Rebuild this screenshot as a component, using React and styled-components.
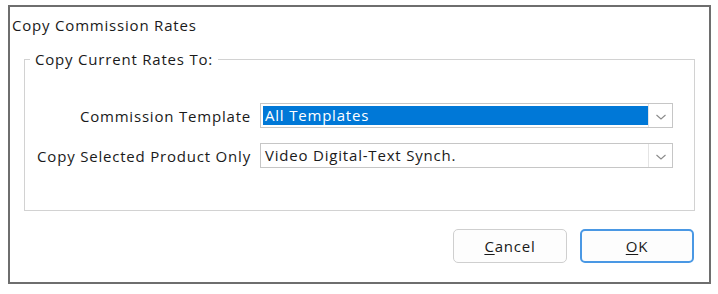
import styled, { createGlobalStyle } from "styled-components"

const GlobalStyle = createGlobalStyle`
    html, body {
        margin: 0;
        padding: 0;
        background: #ffffff;
    }
    body {
        font-family: "Open Sans", "Noto Sans", sans-serif;
        color: #1a1a1a;
    }
`

const rows = [
    { label: "Commission Template", value: "All Templates", selected: true },
    { label: "Copy Selected Product Only", value: "Video Digital-Text Synch.", selected: false },
]

function Chevron() {
    return (
        <svg width="12" height="8" viewBox="0 0 12 8">
            <path d="M1.5 2 L6 6 L10.5 2" fill="none" stroke="#8a8a8a" strokeWidth="1.1" />
        </svg>
    )
}

function ComboBox({ value, selected }) {
    return (
        <Combo>
            <ComboText selected={selected}>{value}</ComboText>
            <DropButton>
                <Chevron />
            </DropButton>
        </Combo>
    )
}

export default function App() {
    return (
        <>
            <GlobalStyle />
            <Window>
                <Title>Copy Commission Rates</Title>
                <GroupBox>
                    <Legend>Copy Current Rates To:</Legend>
                    <FormGrid>
                        {rows.map(r => (
                            <Row key={r.label}>
                                <Label>{r.label}</Label>
                                <ComboBox value={r.value} selected={r.selected} />
                            </Row>
                        ))}
                    </FormGrid>
                </GroupBox>
                <ButtonBar>
                    <Button><u>C</u>ancel</Button>
                    <Button primary><u>O</u>K</Button>
                </ButtonBar>
            </Window>
        </>
    )
}

const Window = styled.div`
    box-sizing: border-box;
    margin: 5px 0 0 8px;
    width: 703px;
    height: 279px;
    border: 2px solid #6e6e6e;
    background: #ffffff;
    display: flex;
    flex-direction: column;
    font-size: 15px;
    letter-spacing: 0.8px;
`
const Title = styled.div`
    padding: 8px 0 0 2px;
    height: 28px;
    line-height: 20px;
`
const GroupBox = styled.fieldset`
    box-sizing: border-box;
    margin: 6px 14px 0 14px;
    padding: 0;
    height: 162px;
    border: 1px solid #d2d2d2;
    min-width: 0;
`
const Legend = styled.legend`
    margin-left: 5px;
    padding: 0 5px;
    line-height: 20px;
`
const FormGrid = styled.div`
    display: flex;
    flex-direction: column;
    gap: 15px;
    padding: 34px 0 0 0;
`
const Row = styled.div`
    display: grid;
    grid-template-columns: 227px 413px;
    column-gap: 8px;
    align-items: center;
`
const Label = styled.div`
    text-align: right;
    white-space: nowrap;
    margin-right: 1px;
`
const Combo = styled.div`
    box-sizing: border-box;
    height: 25px;
    border: 1px solid #c6c6c6;
    display: flex;
    align-items: stretch;
    padding: 2px 0 2px 2px;
    background: #ffffff;
`
const ComboText = styled.div`
    flex: 1;
    line-height: 19px;
    padding-left: 2px;
    background: ${p => p.selected ? "#0078d7" : "transparent"};
    color: ${p => p.selected ? "#ffffff" : "#1a1a1a"};
`
const DropButton = styled.div`
    width: 23px;
    margin: -2px 0;
    border-left: 1px solid #e4e4e4;
    display: flex;
    align-items: center;
    justify-content: center;
    padding-top: 2px;
`
const ButtonBar = styled.div`
    display: flex;
    justify-content: flex-end;
    gap: 13px;
    padding: 18px 15px 0 0;
`
const Button = styled.button`
    box-sizing: border-box;
    width: 114px;
    height: 34px;
    font-family: inherit;
    font-size: 15px;
    letter-spacing: 0.8px;
    color: #1a1a1a;
    background: #fdfdfd;
    border: ${p => p.primary ? "2px solid #4a98e4" : "1px solid #cfcfcf"};
    border-radius: 5px;
    padding: 0;
    u {
        text-decoration-thickness: 1px;
        text-underline-offset: 2px;
    }
`
